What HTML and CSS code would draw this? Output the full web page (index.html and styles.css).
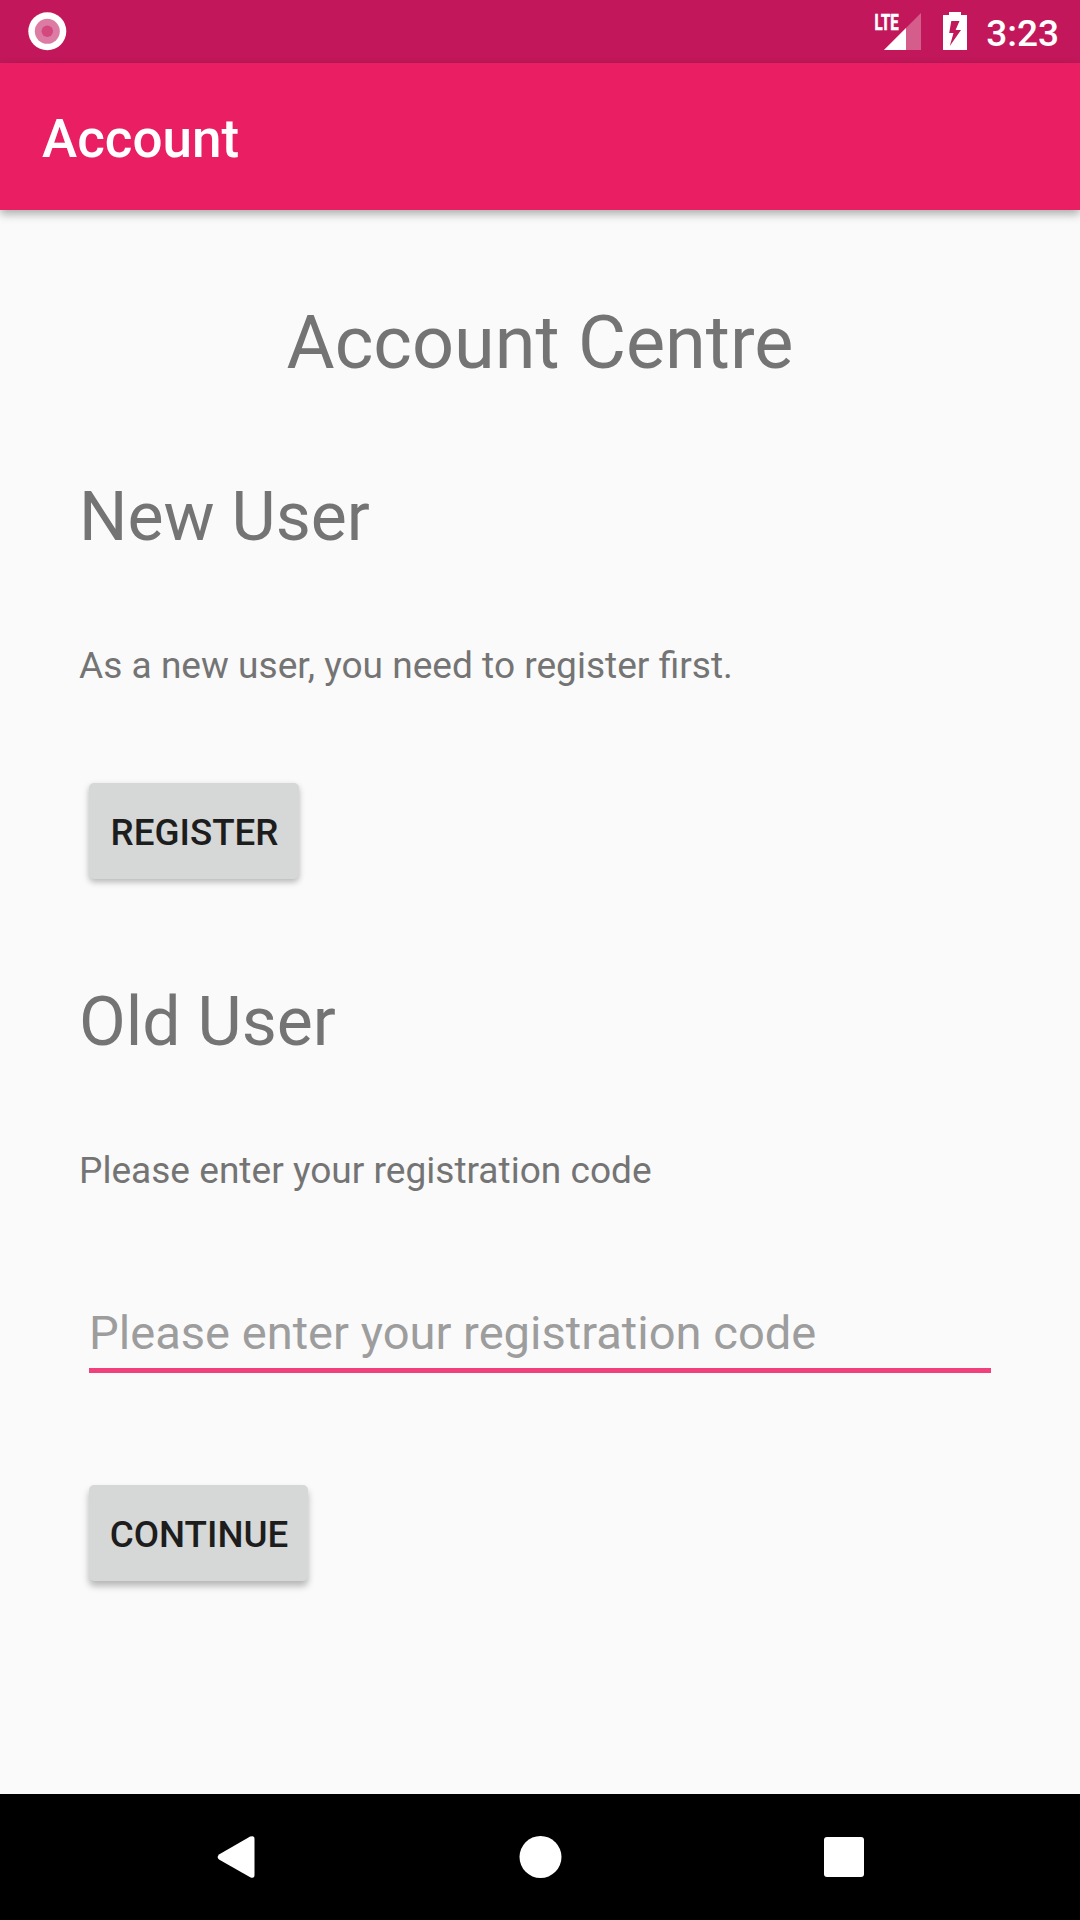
FILE: index.html
```html
<!DOCTYPE html>
<html lang="en">
<head>
<meta charset="utf-8">
<title>Account</title>
<link rel="stylesheet" href="styles.css">
</head>
<body>
<div class="screen">
  <div class="status-bar">
    <svg class="record-icon" width="40" height="40" viewBox="0 0 40 40">
      <circle cx="20.3" cy="20.3" r="19" fill="#fff"/>
      <circle cx="20.3" cy="20.3" r="12.5" fill="#dc7ba3"/>
      <circle cx="20.3" cy="20.3" r="5.7" fill="#d2487f"/>
    </svg>
    <div class="status-right">
      <svg class="signal" width="48" height="50" viewBox="0 -10 48 50">
        <path d="M11 39H48V2z" fill="#fff" fill-opacity=".3"/>
        <path d="M11 39H33V17z" fill="#fff"/>
        <text class="lte" x="1.6" y="18.5" textLength="24" lengthAdjust="spacingAndGlyphs">LTE</text>
      </svg>
      <svg class="battery" width="24" height="38" viewBox="0 0 24 38">
        <path fill="#fff" fill-rule="evenodd" d="M6 0H18V3H24V38H0V3H6zM8.3 9L6.2 21H10.5L6.8 34L18 18H12.6L16.5 9z"/>
      </svg>
      <span class="clock">3:23</span>
    </div>
  </div>
  <header class="app-bar"><h1 class="app-title">Account</h1></header>
  <main class="content">
    <h2 class="page-title">Account Centre</h2>
    <section class="new-user">
      <h3 class="section-title">New User</h3>
      <p class="copy">As a new user, you need to register first.</p>
      <button class="button register">REGISTER</button>
    </section>
    <section class="old-user">
      <h3 class="section-title">Old User</h3>
      <p class="copy">Please enter your registration code</p>
      <input class="code-input" type="text" placeholder="Please enter your registration code">
      <button class="button continue">CONTINUE</button>
    </section>
  </main>
  <nav class="nav-bar">
    <svg width="44" height="44" viewBox="0 0 44 44"><path fill="#fff" d="M4.4 19.2L35.2 1.6Q39.5 0 39.5 4V40Q39.5 44 35.2 42.2L4.4 24.8Q.8 22 4.4 19.2z"/></svg>
    <svg width="44" height="44" viewBox="0 0 44 44"><circle cx="21.5" cy="22" r="21" fill="#fff"/></svg>
    <svg width="44" height="44" viewBox="0 0 44 44"><rect x="2" y="2" width="40" height="40" rx="3" fill="#fff"/></svg>
  </nav>
</div>
</body>
</html>
```
FILE: styles.css
```css
* { box-sizing: border-box; }

body {
  margin: 0;
  background: #fafafa;
  color: #747474;
  font-family: Roboto, sans-serif;
}

h1, h2, h3, p { margin: 0; font-weight: 400; }
svg { display: block; }

.screen {
  display: flex;
  flex-direction: column;
  width: 1080px;
  height: 1920px;
}

.status-bar {
  display: flex;
  justify-content: space-between;
  height: 63px;
  padding: 11px 21px 0 27px;
  background: #c2185b;
}

.status-right { display: flex; color: #fff; }
.signal { margin-top: -10px; }
.lte {
  font-size: 22px;
  font-weight: 700;
  fill: #fff;
  stroke: #fff;
  stroke-width: .7px;
}
.battery { margin: 1px 0 0 22px; }
.clock {
  margin-left: 19px;
  font-size: 37px;
  font-weight: 500;
  line-height: 45px;
}

.app-bar {
  display: flex;
  align-items: center;
  height: 147px;
  padding: 4px 42px 0;
  background: #e91e63;
  color: #fff;
  box-shadow: 0 4px 9px rgba(0, 0, 0, .32);
}
.app-title { font-size: 53px; font-weight: 500; }

.content { flex: 1; padding: 90px 79px 0; }

.page-title {
  font-size: 73.8px;
  line-height: 86px;
  text-align: center;
}
.new-user { margin-top: 91px; }
.old-user { margin-top: 103px; }
.section-title { font-size: 68px; line-height: 80px; }
.copy { margin-top: 87px; font-size: 37.1px; line-height: 44px; }

.button {
  display: block;
  height: 96px;
  margin-left: 10px;
  padding: 2px 0 0 1px;
  border: 0;
  border-radius: 5px;
  background: #d6d7d7;
  color: #1d1d1d;
  font: 500 36.75px Roboto, sans-serif;
  box-shadow: 0 3px 6px rgba(0, 0, 0, .28);
}
.register { width: 210px; margin-top: 95px; }
.continue { width: 219px; margin-top: 112px; box-shadow: 0 5px 7px rgba(0, 0, 0, .28); }

.code-input {
  display: block;
  width: 902px;
  height: 68px;
  margin: 112px 0 0 10px;
  padding: 0 0 8px;
  border: 0;
  border-bottom: 5px solid #f0417c;
  outline: 0;
  background: transparent;
  font: 47.1px/56px Roboto, sans-serif;
}
.code-input::placeholder { color: #9d9d9d; opacity: 1; }

.nav-bar {
  display: flex;
  justify-content: space-between;
  height: 126px;
  padding: 41px 214px 0 215px;
  background: #000;
}
```
